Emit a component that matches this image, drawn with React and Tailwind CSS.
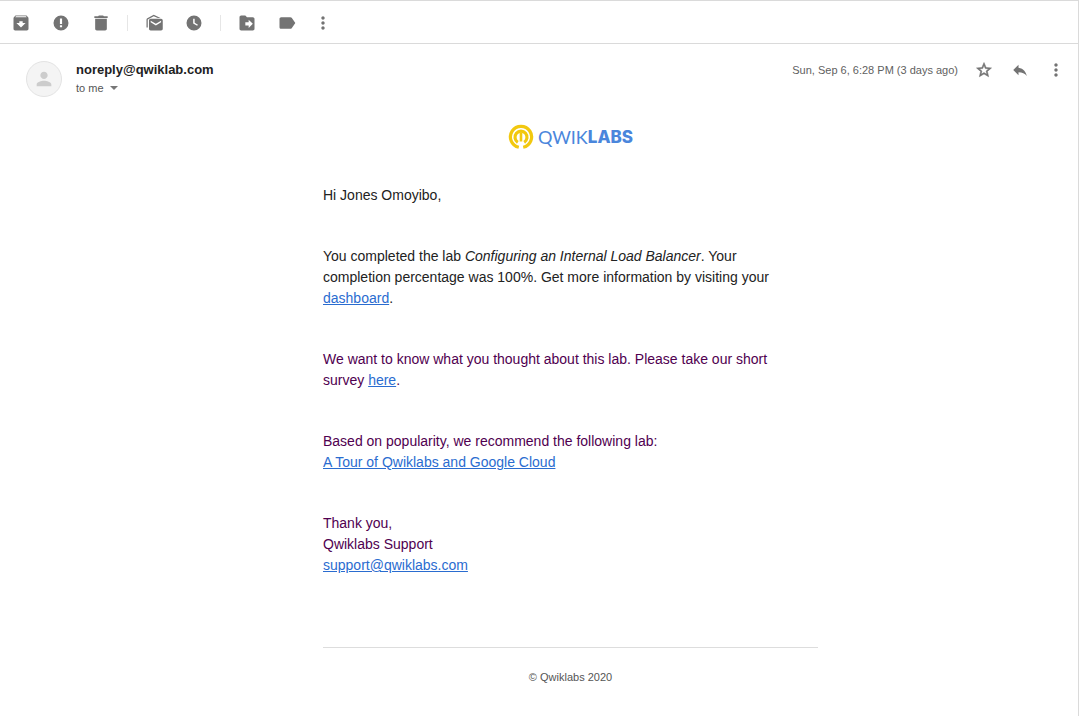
import React from "react";

const paths = {
  archive:
    "M20.54 5.23l-1.39-1.68C18.88 3.21 18.47 3 18 3H6c-.47 0-.88.21-1.16.55L3.46 5.23C3.17 5.57 3 6.02 3 6.5V19c0 1.1.9 2 2 2h14c1.1 0 2-.9 2-2V6.5c0-.48-.17-.93-.46-1.27zM12 17.5L6.5 12H10v-2h4v2h3.5L12 17.5zM5.12 5l.81-1h12l.94 1H5.12z",
  spam: "M12 3a9 9 0 1 0 0 18 9 9 0 0 0 0-18zm1.3 14.2h-2.6v-2.4h2.6v2.4zm0-4h-2.6V6.6h2.6v6.6z",
  trash: "M5 19c0 1.1.9 2 2 2h10c1.1 0 2-.9 2-2V7H5v12zM20 4h-4.500l-1-1h-5l-1 1H4v2h16V4z",
  unread:
    "M20.500 7H8c-1.100 0-2 .9-2 2v10c0 1.100.9 2 2 2h12.500c1.100 0 2-.9 2-2V9c0-1.100-.9-2-2-2zm0 4.200l-6.250 3.800L8 11.200V9.200l6.250 3.800 6.250-3.800v2zM4.500 17.500H3V7.800c0-.7.4-1.300 1-1.600L11.700 2l8.100 4h-3.300l-4.800-2.200-7.200 3.900v9.800z",
  clock: "M12 3a9 9 0 1 0 0 18 9 9 0 0 0 0-18zm3.800 12.400L11 12.600V7h1.800v4.700l3.900 2.300-.9 1.400z",
  move: "M19 5h-7l-2-2H5c-1.100 0-2 .9-2 2v14c0 1.100.9 2 2 2h14c1.100 0 2-.9 2-2V7c0-1.100-.9-2-2-2zm-5 13v-3h-4v-4h4V8l5 5-5 5z",
  label:
    "M17.630 5.840C17.270 5.330 16.670 5 16 5L5 5.010C3.900 5.010 3 5.900 3 7v10c0 1.100.9 1.990 2 1.990L16 19c.67 0 1.270-.33 1.630-.84L22 12l-4.370-6.160z",
  more: "M12 8c1.100 0 2-.9 2-2s-.9-2-2-2-2 .9-2 2 .9 2 2 2zm0 2c-1.100 0-2 .9-2 2s.9 2 2 2 2-.9 2-2-.9-2-2-2zm0 6c-1.100 0-2 .9-2 2s.9 2 2 2 2-.9 2-2-.9-2-2-2z",
  star: "M22 9.240l-7.190-.62L12 2 9.190 8.630 2 9.240l5.460 4.730L5.820 21 12 17.270 18.180 21l-1.630-7.030L22 9.240zM12 15.400l-3.760 2.270 1-4.280-3.320-2.880 4.380-.38L12 6.100l1.710 4.040 4.380.38-3.320 2.880 1 4.280L12 15.400z",
  reply: "M10 9V5l-7 7 7 7v-4.100c5 0 8.500 1.600 11 5.100-1-5-4-10-11-11z",
  person:
    "M12 12c2.210 0 4-1.790 4-4s-1.790-4-4-4-4 1.790-4 4 1.790 4 4 4zm0 2c-2.670 0-8 1.340-8 4v2h16v-2c0-2.660-5.330-4-8-4z",
};

function Icon({ name, className = "size-5", strokeWidth = 0 }) {
  return (
    <svg
      viewBox="0 0 24 24"
      fill="currentColor"
      stroke="currentColor"
      strokeWidth={strokeWidth}
      className={className}
      aria-hidden="true"
    >
      <path d={paths[name]} />
    </svg>
  );
}

function IconButton({ icon, label, className = "w-10", iconClass, strokeWidth }) {
  return (
    <button
      type="button"
      aria-label={label}
      className={`flex h-9 items-center justify-center text-[#737373] ${className}`}
    >
      <Icon name={icon} className={iconClass} strokeWidth={strokeWidth} />
    </button>
  );
}

function Divider() {
  return <div className="mx-1.5 h-4 w-px bg-[#e6e6e6]" />;
}

function MailLink({ href, children }) {
  return (
    <a href={href} className="text-[#2a6cd0] underline">
      {children}
    </a>
  );
}

function Logo() {
  return (
    <div className="flex h-7 items-center justify-center gap-1 text-[#4a86dc]">
      <svg viewBox="0 0 26 26" className="size-[26px]" fill="none" aria-hidden="true">
        <path d="M10.800 23.300A10.600 10.600 0 1 1 15.200 23.300" stroke="#f2c80f" strokeWidth="3.200" />
        <path d="M9.800 18.300A6 6 0 1 1 16.200 18.300" stroke="#f2c80f" strokeWidth="3.200" />
        <path d="M13 8.500V17.500" stroke="#f2c80f" strokeWidth="2.600" />
      </svg>
      <span className="flex items-center leading-7">
        <span className="font-[Lato,sans-serif] text-lg leading-7">QWIK</span>
        <span className="font-[Inter,sans-serif] text-[17px] leading-7 font-extrabold">LABS</span>
      </span>
    </div>
  );
}

export default function App() {
  return (
    <main className="min-h-screen border-t border-r border-[#dadada] bg-white font-['Liberation_Sans',Arial,sans-serif] text-[#222222]">
      <nav aria-label="Message actions" className="flex h-[43px] items-center border-b border-[#dadada] pt-0.5 pl-px">
        <IconButton icon="archive" label="Archive" />
        <IconButton icon="spam" label="Report spam" />
        <IconButton icon="trash" label="Delete" />
        <Divider />
        <IconButton icon="unread" label="Mark as unread" />
        <IconButton icon="clock" label="Snooze" />
        <Divider />
        <IconButton icon="move" label="Move to" />
        <IconButton icon="label" label="Labels" />
        <IconButton icon="more" label="More" className="w-8" />
      </nav>

      <header className="flex items-start pt-2 pr-1 pl-[26px]">
        <div className="mt-[9px] flex size-9 items-center justify-center rounded-full border border-[#e3e3e3] bg-[#f4f4f4] text-[#cccccc]">
          <Icon name="person" className="size-[22px]" />
        </div>
        <div className="ml-3.5 flex-1 pt-2">
          <h1 className="text-[13px] leading-5 font-bold">noreply@qwiklab.com</h1>
          <button type="button" className="flex items-center gap-1.5 text-[11px] leading-4 text-[#555555]">
            to me
            <svg viewBox="0 0 8 4" className="h-1 w-2" fill="#777777" aria-hidden="true">
              <path d="M0 0h8L4 4z" />
            </svg>
          </button>
        </div>
        <time className="mr-2 text-[11px] leading-9 text-[#5f5f5f]">Sun, Sep 6, 6:28 PM (3 days ago)</time>
        <IconButton icon="star" label="Star" className="w-9" iconClass="size-[18px]" strokeWidth={0.7} />
        <IconButton icon="reply" label="Reply" className="w-9" iconClass="size-[18px]" />
        <IconButton icon="more" label="More options" className="w-9" />
      </header>

      <div className="pr-3.5 pl-[77px]">
        <article className="mx-auto max-w-[495px] pt-[26px] text-sm leading-[21px]">
          <Logo />
          <div className="flex flex-col gap-10 pt-[34px] pr-6">
            <p>Hi Jones Omoyibo,</p>
            <p>
              You completed the lab <em>Configuring an Internal Load Balancer</em>. Your completion percentage was
              100%. Get more information by visiting your <MailLink href="#dashboard">dashboard</MailLink>.
            </p>
            <p className="text-[#500050]">
              We want to know what you thought about this lab. Please take our short survey{" "}
              <MailLink href="#survey">here</MailLink>.
            </p>
            <p className="text-[#500050]">
              Based on popularity, we recommend the following lab:
              <br />
              <MailLink href="#tour">A Tour of Qwiklabs and Google Cloud</MailLink>
            </p>
            <p className="text-[#500050]">
              Thank you,
              <br />
              Qwiklabs Support
              <br />
              <MailLink href="mailto:support@qwiklabs.com">support@qwiklabs.com</MailLink>
            </p>
          </div>
          <footer className="mt-[71px] border-t border-[#dddddd] pt-[19px] text-center text-[11px] text-[#555555]">
            © Qwiklabs 2020
          </footer>
        </article>
      </div>
    </main>
  );
}
